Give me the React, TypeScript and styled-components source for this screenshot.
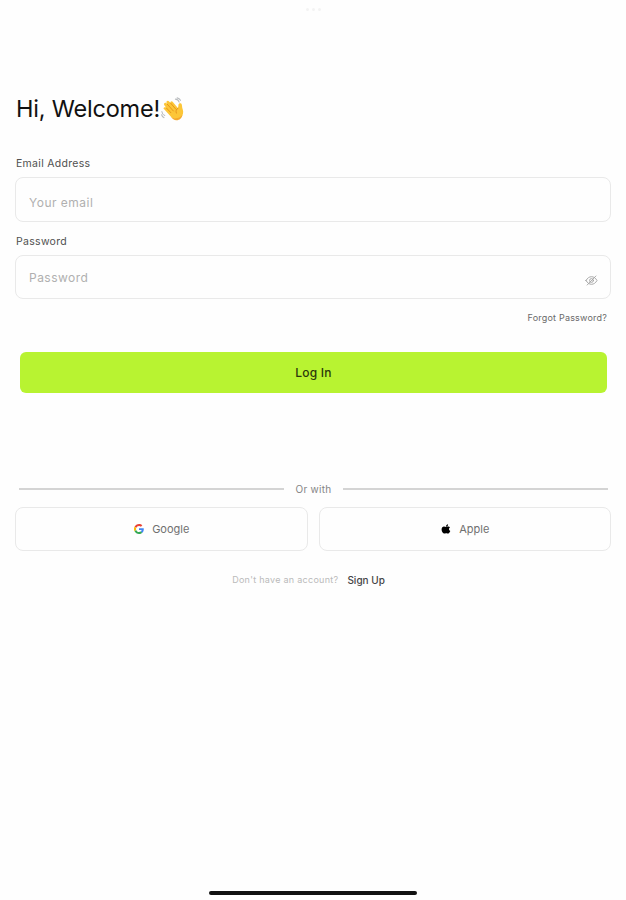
import React from "react";
import styled, { createGlobalStyle } from "styled-components";

const GlobalStyle = createGlobalStyle`
  * { box-sizing: border-box; }
  body { margin: 0; background: #fefefe; }
  button, input { font: inherit; }
`;

const Screen = styled.main`
  display: flex;
  flex-direction: column;
  width: 626px;
  height: 900px;
  padding: 0 15px;
  overflow: hidden;
  background: #fefefe;
  color: #111;
  font-family: Inter, "Liberation Sans", sans-serif;
`;

const WindowDots = styled.div`
  display: flex;
  justify-content: center;
  gap: 3px;
  height: 12px;
  padding-top: 8px;
`;

const Dot = styled.span`
  width: 3px;
  height: 3px;
  border-radius: 50%;
  background: #f3f3f3;
`;

const Title = styled.h1`
  display: flex;
  align-items: center;
  height: 32px;
  margin: 81px 0 0 1px;
  font-size: 23.5px;
  font-weight: 430;
  line-height: 32px;
  letter-spacing: -0.2px;
  white-space: nowrap;
`;

const Wave = styled.svg`
  width: 24px;
  height: 24px;
  margin-left: 1px;
`;

const Label = styled.label<{ $top: number; $gap: number }>`
  height: 14px;
  margin: ${(p) => p.$top}px 0 ${(p) => p.$gap}px 1px;
  color: #505050;
  font-size: 10.5px;
  line-height: 14px;
  letter-spacing: 0.3px;
`;

const Field = styled.div<{ $height: number }>`
  display: flex;
  align-items: center;
  height: ${(p) => p.$height}px;
  padding: 0 12px 0 13px;
  border: 1px solid #e9e9e9;
  border-radius: 8px;
`;

const Input = styled.input<{ $shift: number }>`
  flex: 1;
  min-width: 0;
  padding: ${(p) => p.$shift}px 0 0;
  border: 0;
  outline: 0;
  background: transparent;
  font-size: 12px;
  line-height: 16px;
  letter-spacing: 0.48px;
  &::placeholder { color: #b0b0b0; opacity: 1; }
`;

const EyeIcon = styled.svg`
  width: 13px;
  height: 13px;
  margin-top: 6px;
`;

const Forgot = styled.a`
  align-self: flex-end;
  height: 14px;
  margin: 12px 4px 0 0;
  color: #6a6a6a;
  font-size: 9px;
  line-height: 14px;
  letter-spacing: 0.2px;
`;

const LoginButton = styled.button`
  height: 41px;
  margin: 27px 4px 0 5px;
  padding: 0;
  border: 0;
  border-radius: 6px;
  background: #b8f331;
  color: #2b380b;
  font-size: 12px;
  font-weight: 500;
  letter-spacing: 0.2px;
`;

const Divider = styled.div`
  display: flex;
  align-items: center;
  gap: 11px;
  height: 14px;
  margin: 89px 3px 0 4px;
  color: #858585;
  font-size: 10px;
  line-height: 14px;
  letter-spacing: 0.3px;
`;

const Rule = styled.span`
  flex: 1;
  height: 2px;
  background: #d4d4d4;
`;

const Providers = styled.div`
  display: grid;
  grid-template-columns: 1fr 1fr;
  gap: 11px;
  margin-top: 11px;
`;

const ProviderButton = styled.button`
  display: flex;
  align-items: center;
  justify-content: center;
  gap: 8px;
  height: 44px;
  padding: 0 0 0 1px;
  border: 1px solid #e9e9e9;
  border-radius: 8px;
  background: transparent;
  color: #707070;
  font-size: 11px;
  letter-spacing: 0;
`;

const ProviderIcon = styled.svg`
  width: 10px;
  height: 10px;
`;

const SignUpRow = styled.div`
  display: flex;
  align-items: center;
  justify-content: center;
  gap: 9px;
  height: 14px;
  margin: 22px 9px 0 0;
  line-height: 14px;
`;

const Prompt = styled.span`
  color: #bababa;
  font-size: 9px;
  letter-spacing: 0.28px;
`;

const SignUp = styled.a`
  color: #444;
  font-size: 10px;
  font-weight: 500;
`;

const HomeBar = styled.div`
  align-self: center;
  width: 208px;
  height: 4px;
  margin: auto 0 5px;
  border-radius: 2px;
  background: #111;
`;

const WavingHand = () => (
  <Wave viewBox="0 0 25 25" fill="none" aria-hidden="true">
    <path d="M15 2.200c2 .2 3.300 1.300 3.900 3.100M16.800.900c1.600.300 2.800 1.200 3.500 2.600M.900 15.100c.2 2 1.200 3.500 3 4.200M.600 18.500c.400 1.500 1.300 2.500 2.600 3" stroke="#b9bcbf" strokeWidth="1.1" strokeLinecap="round" />
    <path d="M3 11.200c.8-.8 1.800-.6 2.600.2L3.300 8.300c-1-1.500 1.200-3.100 2.400-1.700l.9 1L5.800 5.900c-.7-1.600 1.500-2.800 2.600-1.300l1.500 1.700c-.6-1.500 1.400-2.600 2.400-1.200l5.500 6.500.4-3.400c.1-2.200 3-2.300 3.500-.2.3 1.400.2 2.800.9 4.800 1.100 3.300.4 6.500-2 8.500-3.400 2.700-7.900 2-10.700-1.200l-6.800-7.500c-.6-.7-.6-1-.1-1.400Z" fill="#fcc638" />
    <path d="m5.600 11.400 4.700 5M6.600 7.600l6.300 7M9.900 6.300l5.600 6.400M17.800 11.600c-2.100 1-2.700 3.100-1.800 5.200" stroke="#e28f17" strokeWidth=".9" strokeLinecap="round" />
    <path d="M10.500 20.500c3.700 2.900 8.800 2.100 11.800-2-.4 3.800-3.400 5.900-6.400 5.700-2.200-.1-4.100-1.500-5.400-3.700Z" fill="#f4a92c" />
  </Wave>
);

const HiddenEye = () => (
  <EyeIcon viewBox="0 0 13 13" fill="none" stroke="#a0a0a0" strokeWidth="0.9" strokeLinecap="round" aria-hidden="true">
    <path d="M1 6.5C2.4 4 4.3 2.7 6.5 2.7S10.6 4 12 6.5c-1.4 2.5-3.3 3.8-5.5 3.8S2.4 9 1 6.5Z" />
    <circle cx="6.5" cy="6.5" r="1.9" />
    <path d="M2.2 11 10.9 2" />
  </EyeIcon>
);

const GoogleLogo = () => (
  <ProviderIcon viewBox="0 0 48 48" aria-hidden="true">
    <path fill="#EA4335" d="M24 9.5c3.5 0 6.7 1.2 9.2 3.6l6.9-6.9C35.9 2.4 30.5 0 24 0 14.6 0 6.5 5.4 2.6 13.2l8 6.2C12.4 13.7 17.7 9.5 24 9.5Z" />
    <path fill="#4285F4" d="M47 24.6c0-1.6-.2-3.1-.4-4.6H24v9h12.9c-.6 3-2.3 5.5-4.7 7.2l7.7 6C44.4 38 47 32 47 24.6Z" />
    <path fill="#FBBC05" d="M10.5 28.6c-.9-3-.9-6.2 0-9.2l-8-6.2a24 24 0 0 0 0 21.6l8-6.2Z" />
    <path fill="#34A853" d="M24 48c6.5 0 11.9-2.1 15.9-5.8l-7.7-6c-2.2 1.5-4.9 2.3-8.2 2.3-6.3 0-11.6-4.2-13.5-9.9l-8 6.2C6.5 42.6 14.6 48 24 48Z" />
  </ProviderIcon>
);

const AppleLogo = () => (
  <ProviderIcon viewBox="0 0 24 24" fill="#000" aria-hidden="true">
    <path d="M17 .5c.2 1.5-.4 2.9-1.3 4-.9 1.1-2.3 1.9-3.7 1.8-.2-1.4.5-2.9 1.3-3.9C14.2 1.4 15.7.6 17 .5ZM21.5 8.2c-3.5 2.2-3 6.9.8 8.4-.8 2.1-2.7 6-4.9 6.4-1.7.2-2.5-1-4.7-1s-3.1 1-4.6 1C4.6 23 1.4 17.3 1.4 13c0-4.4 2.8-6.9 5.7-6.9 2.1 0 3.7 1.3 5 1.3 1.2 0 3.1-1.4 5.5-1.3 1.6.1 3 .8 3.9 2.1Z" />
  </ProviderIcon>
);

export default function App() {
  return (
    <>
      <GlobalStyle />
      <Screen>
        <WindowDots><Dot /><Dot /><Dot /></WindowDots>
        <Title>Hi, Welcome!<WavingHand /></Title>
        <Label htmlFor="email" $top={32} $gap={6}>Email Address</Label>
        <Field $height={45}>
          <Input id="email" type="email" placeholder="Your email" $shift={6} />
        </Field>
        <Label htmlFor="password" $top={13} $gap={6}>Password</Label>
        <Field $height={44}>
          <Input id="password" type="password" placeholder="Password" $shift={2} />
          <HiddenEye />
        </Field>
        <Forgot>Forgot Password?</Forgot>
        <LoginButton>Log In</LoginButton>
        <Divider><Rule />Or with<Rule /></Divider>
        <Providers>
          <ProviderButton><GoogleLogo />Google</ProviderButton>
          <ProviderButton><AppleLogo />Apple</ProviderButton>
        </Providers>
        <SignUpRow>
          <Prompt>Don't have an account?</Prompt>
          <SignUp>Sign Up</SignUp>
        </SignUpRow>
        <HomeBar />
      </Screen>
    </>
  );
}
